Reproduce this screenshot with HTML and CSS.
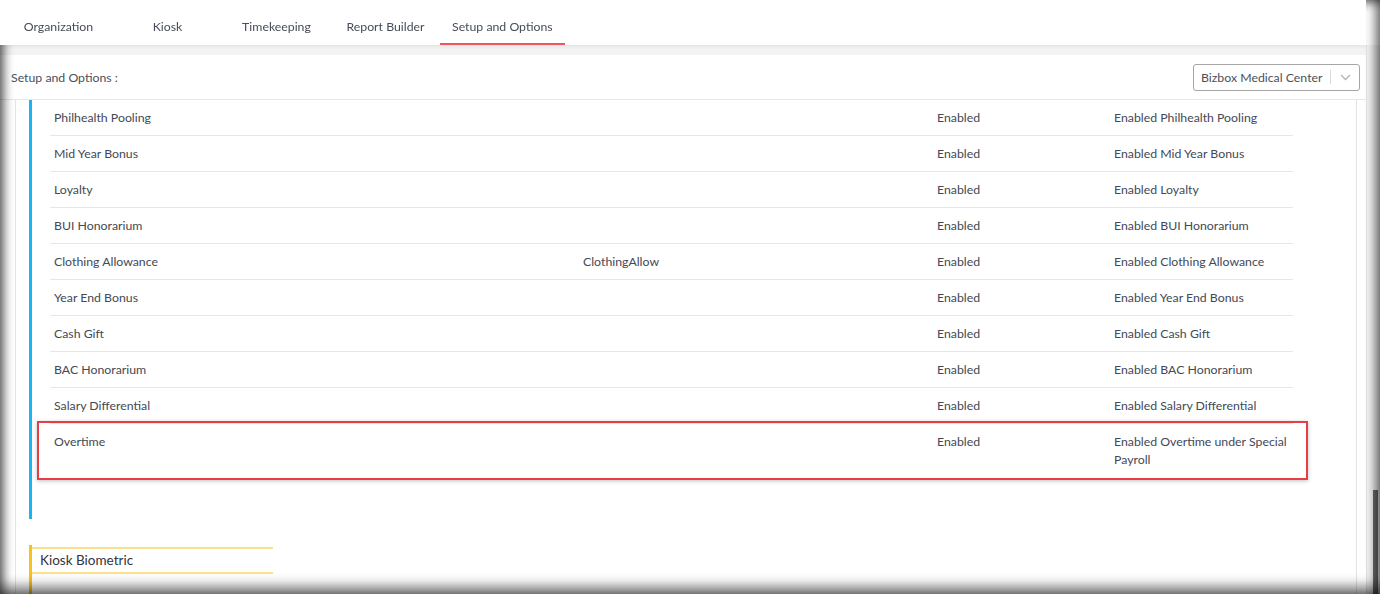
FILE: index.html
```html
<!DOCTYPE html>
<html lang="en">
<head>
	<meta charset="UTF-8">
	<title>Setup and Options</title>
	<link rel="stylesheet" href="styles.css">
</head>
<body>
	<nav class="tabs">
		<a class="tab">Organization</a>
		<a class="tab">Kiosk</a>
		<a class="tab">Timekeeping</a>
		<a class="tab">Report Builder</a>
		<a class="tab active">Setup and Options</a>
	</nav>
	<div class="band"></div>
	<header class="bar">
		<span class="bar-title">Setup and Options :</span>
		<div class="select">
			<span class="select-value">Bizbox Medical Center</span>
			<span class="select-sep"></span>
			<svg class="select-arrow" width="11" height="7" viewBox="0 0 11 7"><path d="M1 1l4.5 4.5L10 1" fill="none" stroke="#b3b3b3" stroke-width="1.3"/></svg>
		</div>
	</header>
	<main class="panel">
		<section class="group">
			<div class="row"><div>Philhealth Pooling</div><div></div><div>Enabled</div><div>Enabled Philhealth Pooling</div></div>
			<div class="row"><div>Mid Year Bonus</div><div></div><div>Enabled</div><div>Enabled Mid Year Bonus</div></div>
			<div class="row"><div>Loyalty</div><div></div><div>Enabled</div><div>Enabled Loyalty</div></div>
			<div class="row"><div>BUI Honorarium</div><div></div><div>Enabled</div><div>Enabled BUI Honorarium</div></div>
			<div class="row"><div>Clothing Allowance</div><div>ClothingAllow</div><div>Enabled</div><div>Enabled Clothing Allowance</div></div>
			<div class="row"><div>Year End Bonus</div><div></div><div>Enabled</div><div>Enabled Year End Bonus</div></div>
			<div class="row"><div>Cash Gift</div><div></div><div>Enabled</div><div>Enabled Cash Gift</div></div>
			<div class="row"><div>BAC Honorarium</div><div></div><div>Enabled</div><div>Enabled BAC Honorarium</div></div>
			<div class="row"><div>Salary Differential</div><div></div><div>Enabled</div><div>Enabled Salary Differential</div></div>
			<div class="row marked"><div>Overtime</div><div></div><div>Enabled</div><div>Enabled Overtime under Special Payroll</div></div>
		</section>
		<section class="group kiosk">
			<h3 class="group-title">Kiosk Biometric</h3>
		</section>
	</main>
	<div class="scrollbar"><div class="thumb"></div></div>
	<div class="vignette"></div>
</body>
</html>
```
FILE: styles.css
```css
html, body {
	margin: 0;
	height: 594px;
	overflow: hidden;
}
body {
	background: #fff;
	color: #434955;
	font: 12.3px "Lato", "Liberation Sans", sans-serif;
	display: flex;
	flex-direction: column;
	padding-right: 14px;
}
body > * { flex-shrink: 0; }

/* tabs */
nav.tabs {
	display: flex;
	height: 45px;
	padding-left: 4px;
	background: #fff;
	box-shadow: 0 2px 3px rgba(0,0,0,0.06);
	position: relative;
	z-index: 1;
}
nav.tabs a.tab {
	min-width: 85px;
	padding: 0 12px;
	text-align: center;
	line-height: 53px;
	height: 43px;
	color: #464c58;
	border-bottom: 2px solid transparent;
}
nav.tabs a.tab.active {
	border-bottom-color: #f0565d;
}
div.band {
	height: 10px;
	background: #f3f3f3;
}

/* header bar */
header.bar {
	height: 44px;
	display: flex;
	align-items: center;
	justify-content: space-between;
	padding: 0 6px 0 11px;
	border-bottom: 1px solid #e6e6e6;
}
header.bar .bar-title { color: #4a505b; }
div.select {
	width: 167px;
	height: 27px;
	border: 1px solid #a6a6a6;
	border-radius: 3px;
	display: flex;
	align-items: center;
	padding-left: 7px;
	box-sizing: border-box;
	color: #4a505b;
}
div.select .select-value { flex: 1; }
div.select .select-sep {
	width: 1px;
	height: 14px;
	background: #d9d9d9;
	margin-right: 9px;
}
div.select .select-arrow { margin-right: 8px; }

/* content panel */
main.panel {
	flex: 1 0 auto;
	margin: 0 9px 0 15px;
	border-left: 1px solid #e3e3e3;
	border-right: 1px solid #e3e3e3;
	padding-left: 13px;
}
section.group {
	border-left: 3px solid #1ab3f3;
	padding: 0 63px 40px 18px;
}
div.row {
	display: grid;
	grid-template-columns: 529px 354px 177px 184px;
	border-bottom: 1px solid #e6e6e6;
	line-height: 18px;
	position: relative;
}
div.row > div { padding: 9px 4px 8px; }
div.row.marked { border-bottom: none; }
div.row.marked > div { padding-bottom: 10px; }
div.row.marked::after {
	content: "";
	position: absolute;
	left: -13px; right: -15px;
	top: -3px; bottom: -1px;
	border: 2px solid #ea3c45;
	box-shadow: 0 1px 4px rgba(0,0,0,0.25);
}

section.group.kiosk {
	border-left-color: #f7c21a;
	margin-top: 26px;
	padding: 2px 0 0 0;
	height: 60px;
}
h3.group-title {
	margin: 0;
	width: 233px;
	padding: 3px 0 4px 8px;
	font-size: 13.5px;
	font-weight: normal;
	color: #2f3440;
	border-top: 2px solid #fde08c;
	border-bottom: 2px solid #fde08c;
}

/* overlays */
div.scrollbar {
	position: fixed;
	top: 45px; right: 0; bottom: 0;
	width: 13px;
	background: #f4f4f4;
	border-left: 1px solid #e3e3e3;
}
div.scrollbar .thumb {
	position: absolute;
	right: 2px; bottom: 0;
	width: 5px;
	height: 104px;
	background: #6d6d6d;
}
div.vignette {
	position: fixed;
	inset: 0;
	pointer-events: none;
	box-shadow: inset 0 8px 8px -4px rgba(0,0,0,0.45),
		inset 9px 0 9px -4px rgba(0,0,0,0.5),
		inset -10px 0 10px -4px rgba(0,0,0,0.45),
		inset 0 -14px 12px -6px rgba(0,0,0,0.5);
}
```
